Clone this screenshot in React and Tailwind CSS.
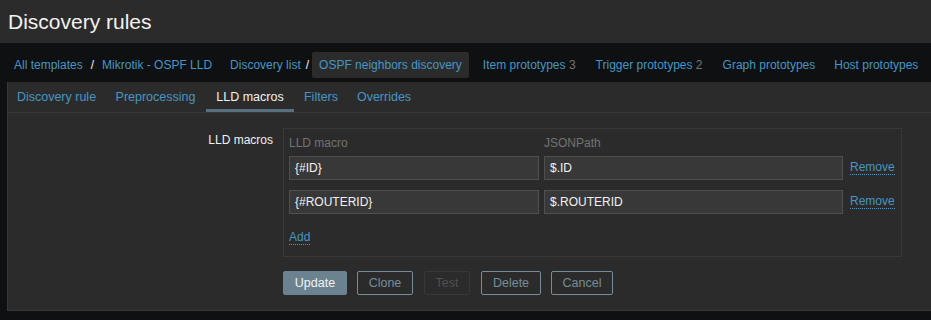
const LINK = "text-[#4796c4]";

function Crumb({ children, count, active }) {
  if (active) {
    return (
      <span className="bg-[#2b2b2b] rounded-[2px] px-[7px] py-[4px] text-[#4796c4]">
        {children}
      </span>
    );
  }
  return (
    <span className={LINK}>
      {children}
      {count && <span className="text-[#737373]"> {count}</span>}
    </span>
  );
}

const TABS = [
  { label: "Discovery rule", w: "w-[97px]" },
  { label: "Preprocessing", w: "w-[101px]" },
  { label: "LLD macros", w: "w-[88px]" },
  { label: "Filters", w: "w-[54px]" },
  { label: "Overrides", w: "w-[72px]" },
];

const MACROS = [
  { macro: "{#ID}", path: "$.ID" },
  { macro: "{#ROUTERID}", path: "$.ROUTERID" },
];

const BUTTONS = [
  { label: "Update", w: "w-[64px]", cls: "bg-[#6b8391] border-[#6b8391] text-[#f2f2f2]" },
  { label: "Clone", w: "w-[56px]", cls: "border-[#768d99] text-[#768d99]" },
  { label: "Test", w: "w-[46px] ml-[1px]", cls: "border-[#383838] text-[#4f4f4f]" },
  { label: "Delete", w: "w-[60px] ml-[1px]", cls: "border-[#768d99] text-[#768d99]" },
  { label: "Cancel", w: "w-[62px]", cls: "border-[#768d99] text-[#768d99]" },
];

export default function App() {
  return (
    <div className="w-[931px] h-[320px] bg-[#0e1012] text-[12px] text-[#f2f2f2] font-['Liberation_Sans',Arial,sans-serif] overflow-hidden">
      {/* Header */}
      <div className="h-[43px] bg-[#2b2b2b] flex items-center px-[8px]">
        <h1 className="text-[21px] leading-none text-[#f2f2f2]">Discovery rules</h1>
      </div>

      {/* Breadcrumbs */}
      <div className="h-[39px] flex items-center pl-[14px] pt-[5px] whitespace-nowrap">
        <Crumb>All templates</Crumb>
        <span className="mx-[8px] text-[#f2f2f2]">/</span>
        <Crumb>Mikrotik - OSPF LLD</Crumb>
        <span className="ml-[18px]"><Crumb>Discovery list</Crumb></span>
        <span className="mx-[3px] ml-[5px] text-[#f2f2f2]">/</span>
        <Crumb active>OSPF neighbors discovery</Crumb>
        <span className="ml-[14px]"><Crumb count="3">Item prototypes</Crumb></span>
        <span className="ml-[20px]"><Crumb count="2">Trigger prototypes</Crumb></span>
        <span className="ml-[20px]"><Crumb>Graph prototypes</Crumb></span>
        <span className="ml-[19px]"><Crumb>Host prototypes</Crumb></span>
      </div>

      {/* Panel */}
      <div className="ml-[7px] h-[229px] bg-[#2b2b2b] border-l border-b border-[#383838]">
        <div className="flex h-[31px] border-b border-[#383838] text-[12.5px]">
          {TABS.map(tab => (
            <div
              key={tab.label}
              className={`${tab.w} flex items-center justify-center border-b-[3px] ${
                tab.label === "LLD macros"
                  ? "border-[#56707f] text-[#f2f2f2]"
                  : `border-transparent ${LINK}`
              }`}
            >
              <span className="pt-[3px]">{tab.label}</span>
            </div>
          ))}
        </div>

        <div className="flex pt-[15px]">
          <div className="w-[265px] text-right pt-[3px]">LLD macros</div>
          <div className="ml-[10px] w-[619px] h-[129px] border border-[#383838] px-[5px]">
            <div className="flex h-[27px] items-center text-[#737373]">
              <span className="w-[255px]">LLD macro</span>
              <span>JSONPath</span>
            </div>
            {MACROS.map(row => (
              <div key={row.macro} className="flex items-center h-[24px] mb-[10px]">
                <div className="w-[250px] h-[24px] bg-[#383838] border border-[#4f4f4f] px-[5px] flex items-center">
                  {row.macro}
                </div>
                <div className="ml-[5px] w-[299px] h-[24px] bg-[#383838] border border-[#4f4f4f] px-[5px] flex items-center">
                  {row.path}
                </div>
                <span className={`ml-[7px] ${LINK} border-b border-dotted border-[#4796c4] leading-[13px]`}>
                  Remove
                </span>
              </div>
            ))}
            <span className={`inline-block mt-[7px] ${LINK} border-b border-dotted border-[#4796c4] leading-[13px]`}>
              Add
            </span>
          </div>
        </div>

        <div className="flex pl-[275px] pt-[14px] gap-[10px]">
          {BUTTONS.map(b => (
            <button
              key={b.label}
              className={`${b.w} h-[24px] border rounded-[2px] text-[12.5px] ${b.cls}`}
            >
              {b.label}
            </button>
          ))}
        </div>
      </div>
    </div>
  );
}
